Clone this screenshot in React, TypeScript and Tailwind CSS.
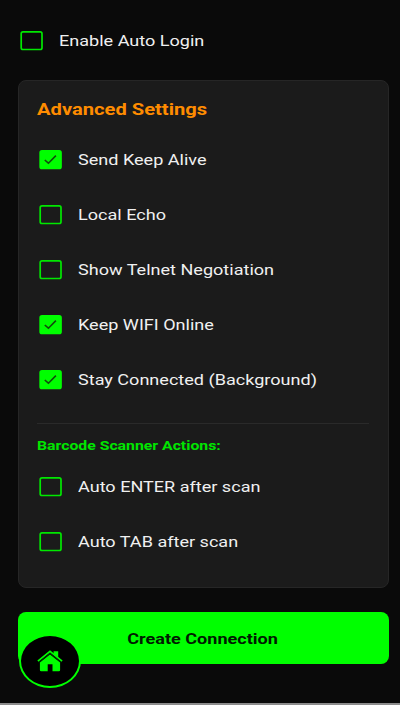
import { useState } from 'react';

interface CheckRowProps {
  label: string;
  defaultChecked?: boolean;
}

function CheckRow({ label, defaultChecked = false }: CheckRowProps) {
  const [checked, setChecked] = useState(defaultChecked);

  return (
    <button
      type="button"
      role="checkbox"
      aria-checked={checked}
      onClick={() => setChecked((prev) => !prev)}
      className="flex h-[55.1px] w-full items-center gap-4 text-left"
    >
      <svg viewBox="0 0 23 20" className="h-5 w-[23px] shrink-0" fill="none">
        <rect
          x="1.2"
          y="0.9"
          width="20.8"
          height="17.6"
          rx="1.8"
          fill={checked ? '#00ff00' : 'none'}
          stroke={checked ? '#00ff00' : '#00e800'}
          strokeWidth="1.7"
        />
        {checked && <path d="M5.8 10 9.4 13.2 16.9 5.6" stroke="#104a0c" strokeWidth="1.6" />}
      </svg>
      <span className="origin-left scale-x-[1.165] whitespace-nowrap pt-px text-[15.5px] text-[#f0f0f0]">{label}</span>
    </button>
  );
}

function HomeIcon() {
  return (
    <svg viewBox="0 0 26 22" className="h-[22px] w-[26px]" fill="#00ff00">
      <path d="M16.6 1.3H21.2V7.6L16.6 3.8Z" />
      <path d="M0.9 11.1 13 1.3 25.1 11.1" fill="none" stroke="#00ff00" strokeWidth="1.7" />
      <path d="M13 4.4 2.9 12.6V20Q2.9 21.3 4.2 21.3H10.7V14.2H15.5V21.3H21.8Q23.1 21.3 23.1 20V12.6Z" />
      <path d="M1.8 12.4 13 3.3 24.2 12.4" fill="none" stroke="#003800" strokeWidth="0.9" />
    </svg>
  );
}

export default function App() {
  return (
    <div className="flex h-[705px] w-[400px] flex-col overflow-hidden border-b-2 border-[#8c8c8c] bg-[#0a0a0a] font-['Roboto',sans-serif]">
      <div className="mt-[13.6px] pl-5">
        <CheckRow label="Enable Auto Login" />
      </div>

      {/* Advanced settings card */}
      <section className="ml-[18px] mt-[11.3px] h-[508px] w-[371px] rounded-lg border border-[#262626] bg-[#1b1b1b] px-[18px]">
        <h2 className="mt-[16px] origin-left scale-x-[1.185] whitespace-nowrap text-[17px] font-bold leading-6 text-[#ff8c00]">
          Advanced Settings
        </h2>
        <div className="mt-[11.4px] pl-0.5">
          <CheckRow label="Send Keep Alive" defaultChecked />
          <CheckRow label="Local Echo" />
          <CheckRow label="Show Telnet Negotiation" />
          <CheckRow label="Keep WIFI Online" defaultChecked />
          <CheckRow label="Stay Connected (Background)" defaultChecked />
        </div>
        <div className="mr-px mt-[15px] border-t border-[#2a2a2a] pt-3">
          <h3 className="origin-left scale-x-[1.215] whitespace-nowrap text-[13px] font-bold leading-5 text-[#00e600]">
            Barcode Scanner Actions:
          </h3>
          <div className="mt-[3.3px] pl-0.5">
            <CheckRow label="Auto ENTER after scan" />
            <CheckRow label="Auto TAB after scan" />
          </div>
        </div>
      </section>

      <div className="relative ml-[18px] mt-6 w-[371px]">
        <button
          type="button"
          className="flex h-[52px] w-full items-center justify-center rounded-lg bg-[#00ff00] text-[#001a00]"
        >
          <span className="scale-x-[1.165] whitespace-nowrap pr-px pt-[3px] text-[15.5px] font-bold">
            Create Connection
          </span>
        </button>
        {/* Floating home button */}
        <button
          type="button"
          aria-label="Home"
          className="absolute left-px top-[22px] flex h-[54px] w-[62px] items-center justify-center rounded-[50%] border-2 border-[#00ff00] bg-black"
        >
          <HomeIcon />
        </button>
      </div>
    </div>
  );
}
